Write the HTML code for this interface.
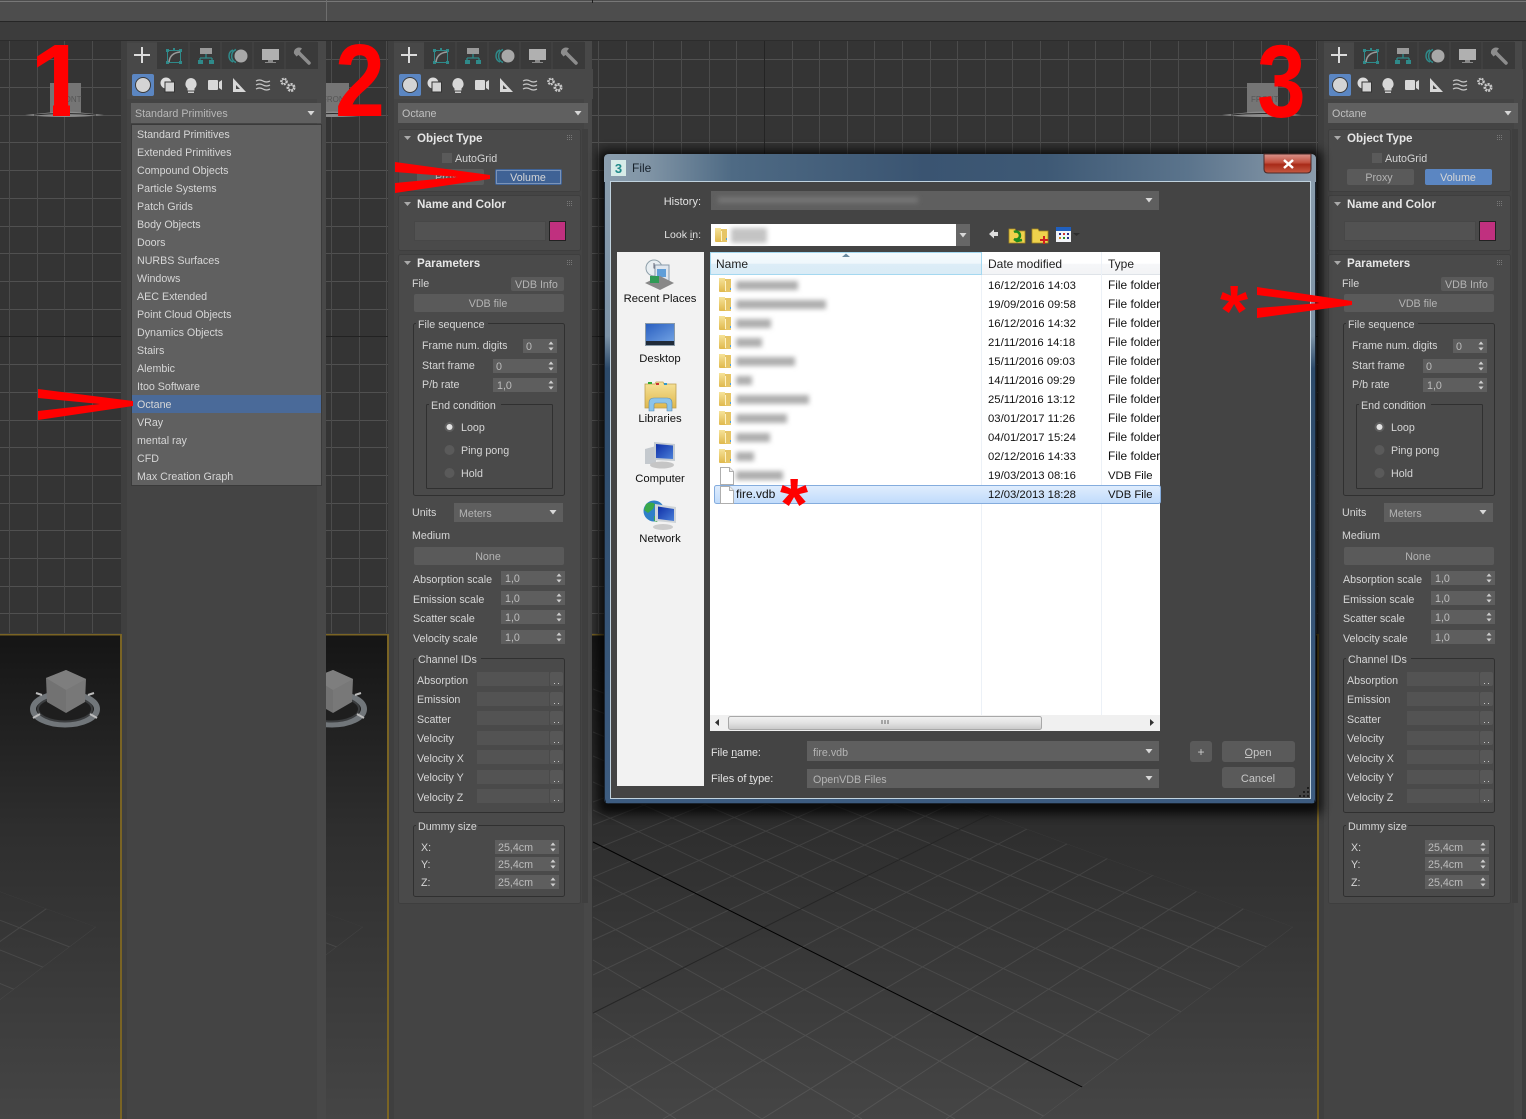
<!DOCTYPE html>
<html><head><meta charset="utf-8"><title>File</title>
<style>
html,body{margin:0;padding:0;background:#3c3c3c;width:1526px;height:1119px;overflow:hidden}
svg{display:block;position:absolute;left:0;top:0}
text{font-family:"Liberation Sans",sans-serif;font-size:10.7px;fill:#d6d6d6;white-space:pre}
.b{font-weight:bold;font-size:11.6px;fill:#e6e6e6}
.m{fill:#b4b4b4}
.v{fill:#bdbdbd}
.l{fill:#111;font-size:11.3px}
.lf{fill:#111;font-size:11.9px}
.h{fill:#222;font-size:12px}
.d{fill:#e2e2e2;font-size:11px}
.r{font-weight:bold;fill:#f00;font-size:103px}
.a{font-weight:bold;fill:#f00;font-size:72px}
</style></head><body>
<svg width="1526" height="1119" viewBox="0 0 1526 1119" xmlns="http://www.w3.org/2000/svg">
<defs>
<linearGradient id="vpb" x1="0" y1="0" x2="0" y2="1"><stop offset="0" stop-color="#151515"/><stop offset=".4" stop-color="#2e2e2e"/><stop offset="1" stop-color="#454545"/></linearGradient>
<linearGradient id="tb" x1="0" y1="0" x2="1" y2="0"><stop offset="0" stop-color="#8b9eae"/><stop offset=".06" stop-color="#8195a6"/><stop offset=".18" stop-color="#4e6a84"/><stop offset=".45" stop-color="#3a5471"/><stop offset=".62" stop-color="#3e5975"/><stop offset=".82" stop-color="#5b748c"/><stop offset="1" stop-color="#8a9bab"/></linearGradient>
<linearGradient id="sd" x1="0" y1="0" x2="0" y2="1"><stop offset="0" stop-color="#8b9eae"/><stop offset=".28" stop-color="#7c92a6"/><stop offset=".33" stop-color="#2c4a6a"/><stop offset="1" stop-color="#3d5c80"/></linearGradient>
<linearGradient id="cl" x1="0" y1="0" x2="0" y2="1"><stop offset="0" stop-color="#d9938c"/><stop offset=".45" stop-color="#c2503f"/><stop offset=".55" stop-color="#a82a18"/><stop offset="1" stop-color="#c65a44"/></linearGradient>
<linearGradient id="hd" x1="0" y1="0" x2="0" y2="1"><stop offset="0" stop-color="#f5fafd"/><stop offset=".5" stop-color="#eff7fc"/><stop offset=".52" stop-color="#dcedf7"/><stop offset="1" stop-color="#d9ebf6"/></linearGradient>
<linearGradient id="hw" x1="0" y1="0" x2="0" y2="1"><stop offset="0" stop-color="#fff"/><stop offset=".5" stop-color="#fff"/><stop offset=".52" stop-color="#f6f7f9"/><stop offset="1" stop-color="#f2f3f5"/></linearGradient>
<linearGradient id="sel" x1="0" y1="0" x2="0" y2="1"><stop offset="0" stop-color="#e0edfd"/><stop offset="1" stop-color="#c0dbfb"/></linearGradient>
<linearGradient id="th" x1="0" y1="0" x2="0" y2="1"><stop offset="0" stop-color="#f2f2f2"/><stop offset=".5" stop-color="#e2e2e2"/><stop offset="1" stop-color="#c8c8c8"/></linearGradient>
<linearGradient id="dk" x1="0" y1="0" x2="1" y2="1"><stop offset="0" stop-color="#2a5fc0"/><stop offset="1" stop-color="#6fa0e2"/></linearGradient>
<linearGradient id="mon" x1="0" y1="0" x2="1" y2="1"><stop offset="0" stop-color="#0f2fa8"/><stop offset="1" stop-color="#4a7fd8"/></linearGradient>
<linearGradient id="fo" x1="0" y1="0" x2="0" y2="1"><stop offset="0" stop-color="#f6e39a"/><stop offset="1" stop-color="#e0b84c"/></linearGradient>
<filter id="bl" x="-30%" y="-80%" width="160%" height="260%"><feGaussianBlur stdDeviation="2.4"/></filter>
<filter id="sh" x="-5%" y="-5%" width="110%" height="110%"><feGaussianBlur stdDeviation="5"/></filter>
<clipPath id="gc"><polygon points="592,669 1293,927 1040,1119 592,1119"/></clipPath>
<clipPath id="v1"><rect x="0" y="635" width="120" height="484"/></clipPath>
<clipPath id="v2"><rect x="326" y="635" width="61" height="484"/></clipPath>
<clipPath id="v3"><rect x="592" y="635" width="725" height="484"/></clipPath>
<clipPath id="lst"><rect x="710" y="252" width="450" height="463"/></clipPath>
<clipPath id="one"><polygon points="28,30 72,30 72,100 70,100 70,118 53,118 53,100 28,100"/></clipPath>

<g id="grid"><g clip-path="url(#gc)" fill="none">
<path stroke="#fff" stroke-opacity=".085" d="M593 669L1400 966M593 689L1400 998M593 709L1400 1031M593 732L1400 1068M593 756L1400 1107M593 782L1334 1119M593 810L1242 1119M593 878L1049 1119M593 917L955 1119M593 960L862 1119M593 1012L762 1119M593 1063L676 1119M1040 1119L1400 846M946 1119L1400 798M852 1119L1400 757M762 1119L1400 721M663 1119L1400 687M593 1107L1400 659M593 1057L1400 633M593 975L1400 589M593 940L1400 570M593 907L1400 553M593 877L1400 537M593 850L1400 523M593 825L1400 509M593 802L1400 497"/>
<path d="M593 1013L1400 609" stroke="#262626"/>
<path d="M593 842L1146 1119" stroke="#000"/>
</g></g>

<g id="cube">
<ellipse cx="65" cy="709" rx="32" ry="15.5" fill="#1e1e1e" stroke="#71767a" stroke-width="6"/>
<ellipse cx="65" cy="709" rx="27" ry="12.5" fill="none" stroke="#3b3d3f" stroke-width="2"/>
<polygon points="66,670 46,678 47,702 66,713" fill="#727272"/>
<polygon points="66,670 86,679 85,702 66,713" fill="#787878"/>
<polygon points="66,670 46,678 66,690 86,679" fill="#7e7e7e"/>
<path d="M36 693l6 2M94 693l-6 2M33 718l7-4M97 718l-7-4" stroke="#bbb" stroke-width="2"/>
</g>

<g id="smallcube">
<rect x="50" y="83" width="31" height="32" fill="#757575"/>
<text x="54" y="102" style="font-size:8px;fill:#555">FRONT</text>
<path d="M25 115L45 113Q65 110 85 113L104 115Q65 119 25 115Z" fill="#8c8c8c"/>
<path d="M34 115Q65 112 96 115" stroke="#2a2a2a" stroke-width="1" fill="none"/>
</g>

<polygon id="tri" points="-3.5,-2 3.5,-2 0,2.5" fill="#d8d8d8"/>
<g id="arr"><polygon points="-2.5,-1.5 2.5,-1.5 0,-4.5" fill="#d0d0d0"/><polygon points="-2.5,1.5 2.5,1.5 0,4.5" fill="#d0d0d0"/></g>
<g id="grip" fill="#777"><rect x="0" y="0" width="1" height="1"/><rect x="2" y="0" width="1" height="1"/><rect x="4" y="0" width="1" height="1"/><rect x="0" y="2" width="1" height="1"/><rect x="2" y="2" width="1" height="1"/><rect x="4" y="2" width="1" height="1"/><rect x="0" y="4" width="1" height="1"/><rect x="2" y="4" width="1" height="1"/><rect x="4" y="4" width="1" height="1"/></g>

<g id="ptop">
<rect x="424" y="42" width="161" height="28" fill="#3a3a3a"/>
<path d="M456 42v27M488 42v27M520 42v27M552 42v27" stroke="#464646"/>
<rect x="394" y="69" width="199" height="30" fill="#484848"/>
<rect x="394" y="43" width="30" height="27" fill="#484848"/>
<path d="M409 47v16M401 55h16" stroke="#dcdcdc" stroke-width="2"/>
<g fill="#2f8a8a"><rect x="433" y="49" width="3" height="3"/><rect x="446" y="49" width="3" height="3"/><rect x="433" y="61" width="3" height="3"/><rect x="446" y="61" width="3" height="3"/><rect x="440" y="48" width="2" height="2"/></g>
<path d="M434.500 52v9M447.500 52v9M436 50.500h10M436 62.500h10" stroke="#2f8a8a" fill="none"/>
<path d="M436 62Q437 53 447 52" stroke="#9a9a9a" stroke-width="1.500" fill="none"/>
<rect x="467" y="48" width="12" height="6" fill="#9a9a9a"/>
<path d="M473 54v4M467 58h12M467 58v3M479 58v3" stroke="#2f8a8a" stroke-width="1.300" fill="none"/>
<rect x="465" y="60" width="5" height="4" fill="#2f8a8a"/><rect x="476" y="60" width="5" height="4" fill="#2f8a8a"/>
<path d="M500 50a6.500 6.500 0 0 0 0 12M503 49.500a7 7 0 0 0 0 13" stroke="#2f8a8a" stroke-width="1.500" fill="none"/><circle cx="508" cy="56" r="6.500" fill="#a8a8a8"/>
<rect x="529" y="49" width="17" height="11" fill="#b0b0b0"/><rect x="535" y="60" width="5" height="2" fill="#8a8a8a"/><rect x="532" y="62" width="11" height="1" fill="#8a8a8a"/>
<path d="M566 53L576 63" stroke="#8d8d8d" stroke-width="3.500" stroke-linecap="round" fill="none"/><path d="M566 47.500a5 5 0 0 0-5 6l2.500 3 4.500-3.500-1-2 2-2.500q-1-1-3-1z" fill="#8d8d8d"/>
<rect x="399" y="74" width="22" height="22" rx="2" fill="#5b86c2"/>
<circle cx="410" cy="85" r="7.500" fill="#d4d4d4" stroke="#3a3a3a" stroke-width="1"/>
<circle cx="433" cy="83" r="5.500" fill="#ddd"/><rect x="432" y="82" width="9.500" height="10" fill="#d4d4d4" stroke="#333"/>
<path d="M458 78a6 6 0 0 1 3.500 10.500v2h-7v-2A6 6 0 0 1 458 78z" fill="#d8d8d8"/><rect x="455" y="91.500" width="6" height="1.500" fill="#ccc"/>
<rect x="475" y="80" width="10" height="10" rx="1" fill="#d8d8d8"/><polygon points="486,82 489,80 489,90 486,88" fill="#d8d8d8"/>
<path d="M500 78V92H513ZM503 85V89H507Z" fill="#d8d8d8" fill-rule="evenodd"/>
<path d="M523 81q3.500-2 7 0t7 0M523 85q3.500-2 7 0t7 0M523 89q3.500-2 7 0t7 0" stroke="#c8c8c8" stroke-width="1.200" fill="none"/>
<circle cx="551" cy="81.500" r="2.800" fill="none" stroke="#c8c8c8" stroke-width="2" stroke-dasharray="1.800 .9"/><circle cx="551" cy="81.500" r="2" fill="none" stroke="#c8c8c8" stroke-width=".8"/>
<circle cx="558" cy="87.500" r="3.300" fill="none" stroke="#c8c8c8" stroke-width="2.400" stroke-dasharray="2 1"/><circle cx="558" cy="87.500" r="2.300" fill="none" stroke="#c8c8c8" stroke-width=".9"/>
<rect x="398" y="103" width="190" height="20" fill="#606060"/>
<use href="#tri" x="578" y="113"/>
</g>

<g id="prol">
<rect x="582" y="129" width="6" height="774" fill="#3f3f3f"/>
<g fill="#4a4a4a" stroke="#3e3e3e">
<rect x="398.500" y="129.500" width="182" height="62" rx="2"/>
<rect x="398.500" y="195.500" width="182" height="55" rx="2"/>
<rect x="398.500" y="254.500" width="182" height="649" rx="2"/>
</g>
<g fill="#aaa"><polygon points="404,136 411,136 407.500,140"/><polygon points="404,202 411,202 407.500,206"/><polygon points="404,261 411,261 407.500,265"/></g>
<use href="#grip" x="567" y="135"/><use href="#grip" x="567" y="201"/><use href="#grip" x="567" y="260"/>
<rect x="442" y="153" width="10" height="10" fill="#5a5a5a"/>
<rect x="414.500" y="221.500" width="131" height="19" fill="#525252" stroke="#474747"/>
<rect x="549.500" y="221.500" width="16" height="19" fill="#c0307f" stroke="#222"/>
<g fill="#5a5a5a">
<rect x="511" y="277" width="53" height="14" rx="2"/>
<rect x="414" y="294" width="150" height="18" rx="2"/>
<rect x="414" y="547" width="150" height="18" rx="2"/>
</g>
<g fill="none" stroke="#303030">
<rect x="413.500" y="323.500" width="151" height="172" rx="2"/>
<rect x="426.500" y="404.500" width="126" height="84" rx="1"/>
<rect x="413.500" y="658.500" width="151" height="154" rx="2"/>
<rect x="413.500" y="825.500" width="151" height="71" rx="2"/>
</g>
<g fill="#4a4a4a"><rect x="416" y="321" width="72" height="5"/><rect x="429" y="402" width="72" height="5"/><rect x="416" y="656" width="65" height="5"/><rect x="416" y="823" width="62" height="5"/></g>
<g fill="#5e5e5e">
<rect x="523" y="339" width="34" height="14"/>
<rect x="493" y="359" width="64" height="14"/>
<rect x="493" y="378" width="64" height="14"/>
<rect x="454" y="503" width="109" height="19"/>
<rect x="501" y="571" width="64" height="14"/>
<rect x="501" y="591" width="64" height="14"/>
<rect x="501" y="610" width="64" height="14"/>
<rect x="501" y="630" width="64" height="14"/>
<rect x="495" y="840" width="64" height="14"/>
<rect x="495" y="857" width="64" height="14"/>
<rect x="495" y="875" width="64" height="14"/>
</g>
<use href="#arr" x="551" y="346"/><use href="#arr" x="551" y="366"/><use href="#arr" x="551" y="385"/>
<use href="#tri" x="553" y="512"/>
<use href="#arr" x="559" y="578"/><use href="#arr" x="559" y="598"/><use href="#arr" x="559" y="617"/><use href="#arr" x="559" y="637"/>
<use href="#arr" x="553" y="847"/><use href="#arr" x="553" y="864"/><use href="#arr" x="553" y="882"/>
<circle cx="449.500" cy="427" r="5" fill="#5e5e5e"/><circle cx="449.500" cy="427" r="3" fill="#e2e2e2"/>
<circle cx="449.500" cy="450" r="5" fill="#5a5a5a"/>
<circle cx="449.500" cy="473" r="5" fill="#5a5a5a"/>
<g fill="#535353">
<rect x="477" y="672" width="72" height="14"/><rect x="477" y="692" width="72" height="14"/><rect x="477" y="711" width="72" height="14"/><rect x="477" y="731" width="72" height="14"/><rect x="477" y="750" width="72" height="14"/><rect x="477" y="770" width="72" height="14"/><rect x="477" y="789" width="72" height="14"/>
</g>
<g fill="#575757">
<rect x="550" y="672" width="13" height="14" rx="2"/><rect x="550" y="692" width="13" height="14" rx="2"/><rect x="550" y="711" width="13" height="14" rx="2"/><rect x="550" y="731" width="13" height="14" rx="2"/><rect x="550" y="750" width="13" height="14" rx="2"/><rect x="550" y="770" width="13" height="14" rx="2"/><rect x="550" y="789" width="13" height="14" rx="2"/>
</g>
<g fill="#c8c8c8">
<rect x="554" y="683" width="1" height="1"/><rect x="558" y="683" width="1" height="1"/><rect x="554" y="703" width="1" height="1"/><rect x="558" y="703" width="1" height="1"/><rect x="554" y="722" width="1" height="1"/><rect x="558" y="722" width="1" height="1"/><rect x="554" y="742" width="1" height="1"/><rect x="558" y="742" width="1" height="1"/><rect x="554" y="761" width="1" height="1"/><rect x="558" y="761" width="1" height="1"/><rect x="554" y="781" width="1" height="1"/><rect x="558" y="781" width="1" height="1"/><rect x="554" y="800" width="1" height="1"/><rect x="558" y="800" width="1" height="1"/>
</g>
</g>

<g id="fld"><path d="M0 1h6v14H1q-1 0-1-1z" fill="url(#fo)"/><path d="M6 2h6v13H6z" fill="#e6c566"/><rect x="6" y="4" width="1" height="10" fill="#fff3c2"/><rect x="11" y="11" width="1" height="2" fill="#4aa0e0"/></g>
<g id="fil"><path d="M.5 .5h9l4 4v13H.5z" fill="#fff" stroke="#aeaeae"/><path d="M9.500 .5v4h4" fill="#eee" stroke="#aeaeae"/></g>
</defs>

<!-- top bars -->
<rect x="0" y="0" width="1526" height="21" fill="#4d4d4d"/>
<rect x="0" y="1" width="1526" height="1" fill="#777"/>
<rect x="0" y="21" width="1526" height="1" fill="#262626"/>
<rect x="0" y="22" width="1526" height="18" fill="#3c3c3c"/>
<rect x="0" y="40" width="1526" height="1" fill="#2c2c2c"/>
<rect x="326" y="0" width="1" height="21" fill="#6e6e6e"/>
<rect x="592" y="0" width="1" height="3" fill="#1e1e1e"/>

<!-- top viewports (columns drawn over) -->
<rect x="0" y="41" width="1318" height="592" fill="#343434"/>
<path stroke="#505050" stroke-width="1" fill="none" d="M0 59.500H1318M0 87.500H1318M0 115.500H1318M0 142.500H1318M0 170.500H1318M0 198.500H1318M0 226.500H1318M0 253.500H1318M0 281.500H1318M0 309.500H1318M0 364.500H1318M0 392.500H1318M0 420.500H1318M0 447.500H1318M0 475.500H1318M0 503.500H1318M0 530.500H1318M0 558.500H1318M0 586.500H1318M0 613.500H1318"/>
<path stroke="#4b4b4b" stroke-width="1" fill="none" d="M9.500 41V633M37.500 41V633M64.500 41V633M92.500 41V633M331.500 41V633M359.500 41V633M386.500 41V633M598.500 41V633M626.500 41V633M653.500 41V633M681.500 41V633M709.500 41V633M736.500 41V633M792.500 41V633M819.500 41V633M847.500 41V633M874.500 41V633M902.500 41V633M930.500 41V633M957.500 41V633M985.500 41V633M1012.500 41V633M1040.500 41V633M1068.500 41V633M1095.500 41V633M1123.500 41V633M1150.500 41V633M1178.500 41V633M1206.500 41V633M1233.500 41V633M1261.500 41V633M1288.500 41V633M1316.500 41V633"/>
<rect x="0" y="336" width="1318" height="1" fill="#222"/>
<rect x="764" y="41" width="1" height="592" fill="#242424"/>
<use href="#smallcube"/>
<use href="#smallcube" x="268"/>
<use href="#smallcube" x="1197"/>

<!-- columns -->
<rect x="121" y="41" width="205" height="1078" fill="#444"/><rect x="121" y="41" width="6" height="1078" fill="#3f3f3f"/><rect x="317" y="41" width="9" height="1078" fill="#484848"/>
<rect x="388" y="41" width="204" height="1078" fill="#444"/><rect x="388" y="41" width="6" height="1078" fill="#3f3f3f"/><rect x="584" y="41" width="8" height="1078" fill="#484848"/>
<rect x="1318" y="41" width="208" height="1078" fill="#444"/><rect x="1318" y="41" width="6" height="1078" fill="#3f3f3f"/><rect x="1514" y="41" width="8" height="1078" fill="#484848"/><rect x="1522" y="41" width="4" height="1078" fill="#3d3d3d"/>

<!-- bottom viewports -->
<rect x="0" y="633" width="120" height="2" fill="#3c3c3c"/><rect x="326" y="633" width="62" height="2" fill="#3c3c3c"/><rect x="592" y="633" width="726" height="2" fill="#3c3c3c"/>
<rect x="0" y="635" width="120" height="484" fill="url(#vpb)"/>
<rect x="326" y="635" width="61" height="484" fill="url(#vpb)"/>
<rect x="592" y="635" width="725" height="484" fill="url(#vpb)"/>
<g clip-path="url(#v1)"><use href="#grid" x="-1197"/><use href="#cube"/></g>
<g clip-path="url(#v2)"><use href="#grid" x="-930"/><use href="#cube" x="267"/></g>
<g clip-path="url(#v3)"><use href="#grid"/></g>
<g fill="#7a6424"><rect x="0" y="634" width="122" height="1.500"/><rect x="120" y="634" width="2" height="485"/><rect x="326" y="634" width="63" height="1.500"/><rect x="387" y="634" width="2" height="485"/><rect x="592" y="634" width="727" height="1.500"/><rect x="1317" y="634" width="2" height="485"/></g>

<!-- panel chrome -->
<use href="#ptop" x="-267"/>
<use href="#ptop"/>
<use href="#ptop" x="930"/>
<use href="#prol"/>
<use href="#prol" x="930"/>

<!-- panel 1 text + list -->
<text x="135" y="117" style="fill:#b8b8b8">Standard Primitives</text>
<rect x="131.500" y="124.500" width="190" height="361" fill="#606060" stroke="#3a3a3a"/>
<rect x="132" y="395" width="189" height="18" fill="#4a6a99"/>
<g style="fill:#e0e0e0">
<text x="137" y="138">Standard Primitives</text>
<text x="137" y="156">Extended Primitives</text>
<text x="137" y="174">Compound Objects</text>
<text x="137" y="192">Particle Systems</text>
<text x="137" y="210">Patch Grids</text>
<text x="137" y="228">Body Objects</text>
<text x="137" y="246">Doors</text>
<text x="137" y="264">NURBS Surfaces</text>
<text x="137" y="282">Windows</text>
<text x="137" y="300">AEC Extended</text>
<text x="137" y="318">Point Cloud Objects</text>
<text x="137" y="336">Dynamics Objects</text>
<text x="137" y="354">Stairs</text>
<text x="137" y="372">Alembic</text>
<text x="137" y="390">Itoo Software</text>
<text x="137" y="408">Octane</text>
<text x="137" y="426">VRay</text>
<text x="137" y="444">mental ray</text>
<text x="137" y="462">CFD</text>
<text x="137" y="480">Max Creation Graph</text>
</g>

<!-- panel 2 -->
<g>
<rect x="417" y="169" width="67" height="16" rx="2" fill="#5a5a5a"/>
<rect x="495" y="169" width="67" height="16" rx="2" fill="#3f6295"/>
<rect x="496.500" y="170.500" width="64" height="13" fill="none" stroke="#b5c4da" stroke-dasharray="1 1"/>
<text x="402" y="117" class="m" style="fill:#c0c0c0">Octane</text>
<text x="417" y="142" class="b">Object Type</text>
<text x="455" y="162">AutoGrid</text>
<text x="435" y="181" class="m">Proxy</text>
<text x="528" y="181" text-anchor="middle">Volume</text>
<text x="417" y="208" class="b">Name and Color</text>
<text x="417" y="267" class="b">Parameters</text>
<text x="412" y="287">File</text>
<text x="515" y="288" class="m">VDB Info</text>
<text x="488" y="307" class="m" text-anchor="middle">VDB file</text>
<text x="418" y="328">File sequence</text>
<text x="422" y="349">Frame num. digits</text><text x="526" y="350" class="v">0</text>
<text x="422" y="369">Start frame</text><text x="496" y="370" class="v">0</text>
<text x="422" y="388">P/b rate</text><text x="497" y="389" class="v">1,0</text>
<text x="431" y="409">End condition</text>
<text x="461" y="431">Loop</text><text x="461" y="454">Ping pong</text><text x="461" y="477">Hold</text>
<text x="412" y="516">Units</text><text x="459" y="517" class="m">Meters</text>
<text x="412" y="539">Medium</text>
<text x="488" y="560" class="m" text-anchor="middle">None</text>
<text x="413" y="583">Absorption scale</text><text x="505" y="582" class="v">1,0</text>
<text x="413" y="603">Emission scale</text><text x="505" y="602" class="v">1,0</text>
<text x="413" y="622">Scatter scale</text><text x="505" y="621" class="v">1,0</text>
<text x="413" y="642">Velocity scale</text><text x="505" y="641" class="v">1,0</text>
<text x="418" y="663">Channel IDs</text>
<text x="417" y="684">Absorption</text><text x="417" y="703">Emission</text><text x="417" y="723">Scatter</text><text x="417" y="742">Velocity</text><text x="417" y="762">Velocity X</text><text x="417" y="781">Velocity Y</text><text x="417" y="801">Velocity Z</text>
<text x="418" y="830">Dummy size</text>
<text x="421" y="851">X:</text><text x="498" y="851" class="v">25,4cm</text>
<text x="421" y="868">Y:</text><text x="498" y="868" class="v">25,4cm</text>
<text x="421" y="886">Z:</text><text x="498" y="886" class="v">25,4cm</text>
</g>

<!-- panel 3 -->
<g transform="translate(930 0)">
<rect x="417" y="169" width="67" height="16" rx="2" fill="#5a5a5a"/>
<rect x="495" y="169" width="67" height="16" rx="2" fill="#5b86c2"/>
<text x="402" y="117" class="m" style="fill:#c0c0c0">Octane</text>
<text x="417" y="142" class="b">Object Type</text>
<text x="455" y="162">AutoGrid</text>
<text x="449" y="181" class="m" text-anchor="middle">Proxy</text>
<text x="528" y="181" text-anchor="middle">Volume</text>
<text x="417" y="208" class="b">Name and Color</text>
<text x="417" y="267" class="b">Parameters</text>
<text x="412" y="287">File</text>
<text x="515" y="288" class="m">VDB Info</text>
<text x="488" y="307" class="m" text-anchor="middle">VDB file</text>
<text x="418" y="328">File sequence</text>
<text x="422" y="349">Frame num. digits</text><text x="526" y="350" class="v">0</text>
<text x="422" y="369">Start frame</text><text x="496" y="370" class="v">0</text>
<text x="422" y="388">P/b rate</text><text x="497" y="389" class="v">1,0</text>
<text x="431" y="409">End condition</text>
<text x="461" y="431">Loop</text><text x="461" y="454">Ping pong</text><text x="461" y="477">Hold</text>
<text x="412" y="516">Units</text><text x="459" y="517" class="m">Meters</text>
<text x="412" y="539">Medium</text>
<text x="488" y="560" class="m" text-anchor="middle">None</text>
<text x="413" y="583">Absorption scale</text><text x="505" y="582" class="v">1,0</text>
<text x="413" y="603">Emission scale</text><text x="505" y="602" class="v">1,0</text>
<text x="413" y="622">Scatter scale</text><text x="505" y="621" class="v">1,0</text>
<text x="413" y="642">Velocity scale</text><text x="505" y="641" class="v">1,0</text>
<text x="418" y="663">Channel IDs</text>
<text x="417" y="684">Absorption</text><text x="417" y="703">Emission</text><text x="417" y="723">Scatter</text><text x="417" y="742">Velocity</text><text x="417" y="762">Velocity X</text><text x="417" y="781">Velocity Y</text><text x="417" y="801">Velocity Z</text>
<text x="418" y="830">Dummy size</text>
<text x="421" y="851">X:</text><text x="498" y="851" class="v">25,4cm</text>
<text x="421" y="868">Y:</text><text x="498" y="868" class="v">25,4cm</text>
<text x="421" y="886">Z:</text><text x="498" y="886" class="v">25,4cm</text>
</g>

<!-- dialog -->
<rect x="598" y="150" width="724" height="664" rx="6" fill="#000" opacity=".75" filter="url(#sh)"/>
<rect x="604" y="154" width="712" height="650" rx="5" fill="url(#sd)"/>
<rect x="604.500" y="154.500" width="711" height="649" rx="5" fill="none" stroke="#1a2430"/>
<path d="M604 182V159q0-5 5-5H1311q5 0 5 5V182Z" fill="url(#tb)"/>
<rect x="606" y="798" width="708" height="5" fill="#3d5c80"/>
<rect x="610.500" y="181.500" width="700" height="617" fill="#444" stroke="#c0d2de"/>
<rect x="611" y="160" width="15" height="16" fill="#d8ece8"/>
<text x="618.500" y="173" text-anchor="middle" style="font-weight:bold;font-size:13px;fill:#1f8a8a">3</text>
<text x="632" y="172" style="font-size:12px;fill:#16202a">File</text>
<path d="M1264 154h47v15q0 4-4 4h-39q-4 0-4-4z" fill="url(#cl)" stroke="#4a2a28"/>
<path d="M1284 160l9 8M1293 160l-9 8" stroke="#fff" stroke-width="2.500"/>

<text x="701" y="205" text-anchor="end" class="d">History:</text>
<rect x="711" y="191" width="448" height="19" fill="#5f5f5f"/>
<rect x="718" y="197" width="200" height="6" fill="#767676" filter="url(#bl)"/>
<use href="#tri" x="1149" y="200"/>
<text x="701" y="238" text-anchor="end" class="d" style="font-size:10.500px">Look in:</text>
<rect x="690" y="239" width="3" height="1" fill="#d0d0d0"/>
<rect x="711" y="224" width="245" height="22" fill="#fff"/>
<use href="#fld" x="715" y="227"/>
<rect x="731" y="228" width="36" height="15" fill="#c4c4c4" filter="url(#bl)"/>
<rect x="956" y="224" width="14" height="22" fill="#666"/><use href="#tri" x="963" y="235"/>
<polygon points="989,234 994,229.500 994,232 998,232 998,236 994,236 994,238.500" fill="#ddd"/>
<path d="M1009 229h6l1 2h9v12h-16z" fill="#efd24c" stroke="#a88a20" stroke-width=".8"/><path d="M1014 232a4 4 0 1 1 0 7l3 2 5-1" fill="none" stroke="#1e8a1e" stroke-width="2.500"/>
<path d="M1032 229h6l1 2h9v12h-16z" fill="#efd24c" stroke="#a88a20" stroke-width=".8"/><path d="M1044 236v8M1040 240h8" stroke="#d02020" stroke-width="2"/>
<rect x="1056" y="227" width="15" height="15" fill="#f2f4f8"/><rect x="1056" y="227" width="15" height="4" fill="#2060c0"/>
<g><rect x="1059" y="233" width="2" height="2" fill="#2a2a8a"/><rect x="1063" y="233" width="2" height="2" fill="#d03030"/><rect x="1067" y="233" width="2" height="2" fill="#2a2a8a"/><rect x="1059" y="237" width="2" height="2" fill="#d08020"/><rect x="1063" y="237" width="2" height="2" fill="#2a8a2a"/><rect x="1067" y="237" width="2" height="2" fill="#2a2a8a"/></g>
<polygon points="1073,233 1080,233 1076.500,236" fill="#2e2e2e"/>

<!-- sidebar -->
<rect x="617" y="252" width="87" height="534" fill="#f2f2f2"/>
<g>
<circle cx="654" cy="268" r="8" fill="#e8eef2" stroke="#8fa0aa"/><path d="M654 263v5l3 2" stroke="#667" fill="none"/>
<rect x="655" y="265" width="14" height="16" fill="#dfe6ee" stroke="#8899aa"/><rect x="657" y="269" width="9" height="8" fill="#5f9ed8"/>
<polygon points="645,283 660,276 674,283 660,290" fill="#888"/><rect x="650" y="276" width="9" height="7" fill="#2f9a55"/>
<rect x="645" y="323" width="30" height="23" fill="#8a9aa8"/><rect x="646" y="324" width="28" height="17" fill="url(#dk)"/><rect x="646" y="341" width="28" height="4" fill="#1f2a38"/>
<path d="M645 384h10l1-2h7l1 2h12v24h-31z" fill="url(#fo)" stroke="#c0a050" stroke-width=".8"/><rect x="648" y="382" width="4" height="2" fill="#3a3"/><rect x="656" y="383" width="3" height="2" fill="#c33"/><rect x="664" y="383" width="3" height="2" fill="#39c"/>
<path d="M649 411v-8q0-5 5-5h13q5 0 5 5v8h-5v-6q0-2-2-2h-9q-2 0-2 2v6z" fill="#8cc4ea" stroke="#5a8ab0" stroke-width=".6"/>
<polygon points="645,449 656,446 656,464 645,464" fill="#c4c9ce"/><polygon points="654,442 675,444 675,461 654,460" fill="#c5ccd2"/><polygon points="656,444 673,445.500 673,459 656,458" fill="url(#mon)"/><ellipse cx="662" cy="465" rx="12" ry="3.500" fill="#c5c5c5"/>
<circle cx="654" cy="511" r="10.500" fill="#2f7fc8"/><path d="M646 504q5-3 9 0l-2 5-5 4-4-3zM654 516l6 1-3 5-3-1z" fill="#3aa84a"/><polygon points="655,504 676,507 676,523 655,521" fill="#cfd4d8"/><polygon points="658,506.500 674,509 674,521 658,519" fill="url(#mon)"/><ellipse cx="663" cy="527" rx="10" ry="3" fill="#ccc"/>
</g>
<g>
<text x="660" y="302" text-anchor="middle" style="fill:#111;font-size:11.300px">Recent Places</text>
<text x="660" y="362" text-anchor="middle" style="fill:#111;font-size:11.300px">Desktop</text>
<text x="660" y="422" text-anchor="middle" style="fill:#111;font-size:11.300px">Libraries</text>
<text x="660" y="482" text-anchor="middle" style="fill:#111;font-size:11.300px">Computer</text>
<text x="660" y="542" text-anchor="middle" style="fill:#111;font-size:11.300px">Network</text>
</g>

<!-- file list -->
<rect x="710" y="252" width="450" height="479" fill="#fff"/>
<rect x="982" y="252" width="178" height="23" fill="url(#hw)"/>
<rect x="710.500" y="252.500" width="271" height="22" fill="url(#hd)" stroke="#a4d8f0"/>
<rect x="982" y="274" width="178" height="1" fill="#dfe3e8"/>
<path d="M981.500 275V715M1101.500 252V715" stroke="#ecf1f7"/>
<polygon points="842,257 846,253.500 850,257" fill="#6a8aa0"/>
<text x="716" y="268" class="h">Name</text>
<text x="988" y="268" class="h">Date modified</text>
<text x="1108" y="268" class="h">Type</text>
<use href="#fld" x="719" y="277"/><use href="#fld" x="719" y="296"/><use href="#fld" x="719" y="315"/><use href="#fld" x="719" y="334"/><use href="#fld" x="719" y="353"/><use href="#fld" x="719" y="372"/><use href="#fld" x="719" y="391"/><use href="#fld" x="719" y="410"/><use href="#fld" x="719" y="429"/><use href="#fld" x="719" y="448"/>
<g fill="#aeaeae" filter="url(#bl)">
<rect x="736" y="281" width="62" height="9"/><rect x="736" y="300" width="90" height="9"/><rect x="736" y="319" width="35" height="9"/><rect x="736" y="338" width="26" height="9"/><rect x="736" y="357" width="59" height="9"/><rect x="736" y="376" width="16" height="9"/><rect x="736" y="395" width="73" height="9"/><rect x="736" y="414" width="51" height="9"/><rect x="736" y="433" width="34" height="9"/><rect x="736" y="452" width="18" height="9"/><rect x="736" y="471" width="47" height="9"/>
</g>
<use href="#fil" x="720" y="467"/>
<rect x="714.500" y="485.500" width="446" height="18" rx="2" fill="url(#sel)" stroke="#84acdd"/>
<use href="#fil" x="720" y="486"/>
<g clip-path="url(#lst)">
<text x="988" y="289" class="l">16/12/2016 14:03</text><text x="1108" y="289" class="lf">File folder</text>
<text x="988" y="308" class="l">19/09/2016 09:58</text><text x="1108" y="308" class="lf">File folder</text>
<text x="988" y="327" class="l">16/12/2016 14:32</text><text x="1108" y="327" class="lf">File folder</text>
<text x="988" y="346" class="l">21/11/2016 14:18</text><text x="1108" y="346" class="lf">File folder</text>
<text x="988" y="365" class="l">15/11/2016 09:03</text><text x="1108" y="365" class="lf">File folder</text>
<text x="988" y="384" class="l">14/11/2016 09:29</text><text x="1108" y="384" class="lf">File folder</text>
<text x="988" y="403" class="l">25/11/2016 13:12</text><text x="1108" y="403" class="lf">File folder</text>
<text x="988" y="422" class="l">03/01/2017 11:26</text><text x="1108" y="422" class="lf">File folder</text>
<text x="988" y="441" class="l">04/01/2017 15:24</text><text x="1108" y="441" class="lf">File folder</text>
<text x="988" y="460" class="l">02/12/2016 14:33</text><text x="1108" y="460" class="lf">File folder</text>
<text x="988" y="479" class="l">19/03/2013 08:16</text><text x="1108" y="479" class="l">VDB File</text>
<text x="736" y="498" class="l" style="font-size:12px">fire.vdb</text>
<text x="988" y="498" class="l">12/03/2013 18:28</text><text x="1108" y="498" class="l">VDB File</text>
</g>
<rect x="710" y="715" width="450" height="16" fill="#f0f0f0"/>
<rect x="728.500" y="716.500" width="313" height="13" rx="2" fill="url(#th)" stroke="#a8a8a8"/>
<path d="M882 720v4M885 720v4M888 720v4" stroke="#666"/>
<polygon points="715,722.500 719,719 719,726" fill="#333"/><polygon points="1154,722.500 1150,719 1150,726" fill="#333"/>

<!-- dialog bottom -->
<text x="711" y="756" class="d" style="font-size:10.700px">File name:</text>
<rect x="731" y="757" width="6" height="1" fill="#d0d0d0"/>
<text x="711" y="782" class="d">Files of type:</text>
<rect x="749" y="783" width="4" height="1" fill="#d0d0d0"/>
<rect x="807" y="741" width="352" height="20" fill="#5f5f5f"/>
<rect x="807" y="769" width="352" height="19" fill="#5f5f5f"/>
<use href="#tri" x="1149" y="751"/><use href="#tri" x="1149" y="778"/>
<text x="813" y="756" class="m">fire.vdb</text>
<text x="813" y="783" class="m">OpenVDB Files</text>
<rect x="1190" y="741" width="22" height="21" rx="3" fill="#5a5a5a"/>
<text x="1201" y="756" text-anchor="middle" style="font-size:12px;fill:#ccc">+</text>
<rect x="1222" y="741" width="73" height="21" rx="3" fill="#5a5a5a"/>
<rect x="1222" y="767" width="73" height="21" rx="3" fill="#5a5a5a"/>
<text x="1258" y="756" text-anchor="middle" style="font-size:11px;fill:#c8c8c8">Open</text>
<rect x="1245" y="757" width="7" height="1" fill="#c8c8c8"/>
<text x="1258" y="782" text-anchor="middle" style="font-size:11px;fill:#c8c8c8">Cancel</text>
<g fill="#1e1e1e"><rect x="1307" y="787" width="2" height="2"/><rect x="1303" y="791" width="2" height="2"/><rect x="1307" y="791" width="2" height="2"/><rect x="1299" y="795" width="2" height="2"/><rect x="1303" y="795" width="2" height="2"/><rect x="1307" y="795" width="2" height="2"/></g>

<!-- red annotations -->
<g clip-path="url(#one)"><text x="30" y="116" class="r">1</text></g>
<text transform="translate(335 116) scale(.87 1)" class="r">2</text>
<text transform="translate(1257 117) scale(.85 1)" class="r">3</text>
<polygon points="38,389 133,401 133,406 38,420 38,411 100,404 38,398" fill="#f00"/>
<polygon points="395,162 490,175 490,179 395,193 395,183 458,177 395,172" fill="#f00"/>
<polygon points="1257,287 1352,301 1352,305 1257,318 1257,308 1320,303 1257,295" fill="#f00"/>
<text x="1220" y="336" class="a">*</text>
<text x="780" y="529" class="a">*</text>
</svg>
</body></html>
